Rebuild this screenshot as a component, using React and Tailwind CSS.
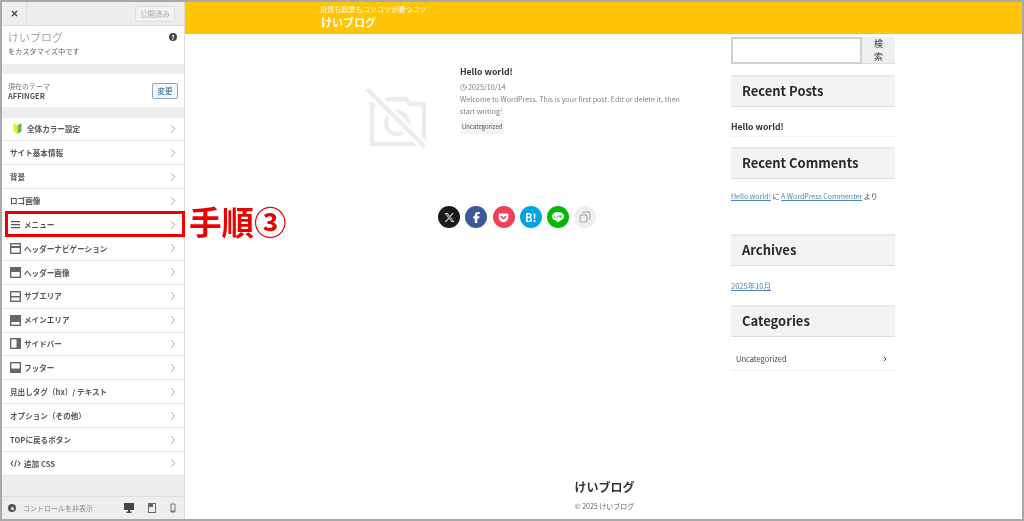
import React from "react";
import { FaXTwitter, FaFacebookF, FaGetPocket } from "react-icons/fa6";
import { Copy, ChevronRight, Clock, X } from "lucide-react";

const font = { fontFamily: '"Noto Sans CJK JP", "Noto Sans", sans-serif' };

// small layout glyphs from the customizer panel
function PanelIcon({ fill }) {
  return (
    <svg width="11" height="11" viewBox="0 0 11 11" className="shrink-0">
      <rect x="0.7" y="0.7" width="9.6" height="9.6" fill="none" stroke="#666" strokeWidth="1.4" />
      <path d={fill} fill="#666" />
    </svg>
  );
}

function MenuIcon() {
  return (
    <svg width="11" height="11" viewBox="0 0 11 11" className="shrink-0">
      <path d="M1 2h9v1.300H1zM1 5h9v1.300H1zM1 8h9v1.300H1z" fill="#555" />
    </svg>
  );
}

function CodeIcon() {
  return (
    <svg width="11" height="9" viewBox="0 0 11 9" className="shrink-0">
      <path d="M3 2 1 4.500 3 7M8 2l2 2.500L8 7M6.300 1 4.700 8" fill="none" stroke="#555" strokeWidth="1.1" />
    </svg>
  );
}

function Beginner() {
  return (
    <svg width="11" height="13" viewBox="0 0 11 13" className="shrink-0">
      <path d="M1.500 1l4 2.500V12l-4-2.500z" fill="#f4ea1a" />
      <path d="M9.500 1l-4 2.500V12l4-2.500z" fill="#5cb85c" />
    </svg>
  );
}

const menuItems = [
  { label: "全体カラー設定", icon: <Beginner />, beginner: true },
  { label: "サイト基本情報" },
  { label: "背景" },
  { label: "ロゴ画像" },
  { label: "メニュー", icon: <MenuIcon /> },
  { label: "ヘッダーナビゲーション", icon: <PanelIcon fill="M1 3h9v2H1z" /> },
  { label: "ヘッダー画像", icon: <PanelIcon fill="M1 1h9v4H1z" /> },
  { label: "サブエリア", icon: <PanelIcon fill="M1 5h9v1.500H1z" /> },
  { label: "メインエリア", icon: <PanelIcon fill="M1 1h9v6H1z" /> },
  { label: "サイドバー", icon: <PanelIcon fill="M6.500 1H10v9H6.500z" /> },
  { label: "フッター", icon: <PanelIcon fill="M1 6.500h9V10H1z" /> },
  { label: "見出しタグ（hx）/ テキスト" },
  { label: "オプション（その他）" },
  { label: "TOPに戻るボタン" },
  { label: "追加 CSS", icon: <CodeIcon /> },
];

function MenuRow({ item }) {
  return (
    <div className={`flex h-[23.9px] items-center justify-between border-b border-[#e6e6e6] bg-white pr-[4px] ${item.beginner ? "pl-[10px]" : "pl-[8px]"}`}>
      <div className={`flex items-center ${item.beginner ? "gap-[4px]" : "gap-[3px]"}`}>
        {item.icon}
        <span className="text-[7.6px] font-bold text-[#555]">{item.label}</span>
      </div>
      <ChevronRight size={14} strokeWidth={1.5} className="text-[#9a9a9a]" />
    </div>
  );
}

function Sidebar() {
  return (
    <aside className="flex w-[183px] shrink-0 flex-col border-r border-[#ddd] bg-[#eeeeee]">
      <div className="flex h-[24px] shrink-0 items-center justify-between border-b border-[#ddd]">
        <div className="flex h-full w-[25px] items-center justify-center border-r border-[#ddd] text-[#444]">
          <X size={9} strokeWidth={3.5} />
        </div>
        <div className="mr-[9px] flex h-[16px] w-[40px] items-center justify-center rounded-[2px] border border-[#ddd] bg-[#f3f3f3] text-[7.5px] text-[#aaa]">公開済み</div>
      </div>
      <div className="flex h-[38px] shrink-0 items-start justify-between bg-white pl-[6px] pr-[7px] pt-[4px]">
        <div>
          <div className="text-[11px] leading-[15px] text-[#a8a8a8]">けいブログ</div>
          <div className="text-[7.2px] leading-[12px] text-[#666]">をカスタマイズ中です</div>
        </div>
        <div className="mt-[3px] flex h-[8px] w-[8px] items-center justify-center rounded-full bg-[#444] text-[6.5px] font-bold leading-none text-white">?</div>
      </div>
      <div className="mt-[10px] flex h-[33px] shrink-0 items-center justify-between bg-white pl-[6px] pr-[6px]">
        <div>
          <div className="text-[7px] leading-[10px] text-[#777]">現在のテーマ</div>
          <div className="text-[7.5px] font-bold leading-[10px] text-[#555]">AFFINGER</div>
        </div>
        <div className="flex h-[16px] w-[26px] items-center justify-center rounded-[2px] border border-[#7fa8c9] bg-[#f4f7f9] text-[7.5px] text-[#2c5f88]">変更</div>
      </div>
      <div className="mt-[10.5px] shrink-0">
        {menuItems.map((item) => (
          <MenuRow key={item.label} item={item} />
        ))}
      </div>
      <div className="mt-auto flex h-[23px] shrink-0 items-center border-t border-[#ddd] pl-[6px] pr-[8px]">
        <div className="flex h-[8px] w-[8px] items-center justify-center rounded-full bg-[#555]">
          <div className="h-[3px] w-[3px] rounded-full bg-[#eee]"></div>
        </div>
        <span className="ml-[7px] text-[7px] text-[#888]">コントロールを非表示</span>
        <div className="ml-auto flex items-center gap-[14px]">
          <svg width="10" height="10" viewBox="0 0 10 10"><path d="M0 0h10v7H6v1.500h1.500V10h-5V8.500H4V7H0z" fill="#444" /></svg>
          <svg width="8" height="10" viewBox="0 0 8 10"><rect x="0.500" y="0.500" width="7" height="9" fill="none" stroke="#666" /><path d="M1 1h4v3H1z" fill="#666" /></svg>
          <svg width="6" height="10" viewBox="0 0 6 10"><rect x="0.500" y="0.500" width="5" height="9" rx="1" fill="#777" /><rect x="1.500" y="1.500" width="3" height="6" fill="#eee" /></svg>
        </div>
      </div>
    </aside>
  );
}

function ShareButton({ bg, children }) {
  return <div className={`flex h-[22px] w-[22px] items-center justify-center rounded-full ${bg}`}>{children}</div>;
}

function ShareRow() {
  return (
    <div className="mt-[54px] ml-[253px] flex gap-[5.3px]">
      <ShareButton bg="bg-[#1a1a1a]"><FaXTwitter size={11} color="#d8d8d8" /></ShareButton>
      <ShareButton bg="bg-[#3b5998]"><FaFacebookF size={11} color="#fff" /></ShareButton>
      <ShareButton bg="bg-[#ee4056]"><FaGetPocket size={11} color="#fff" /></ShareButton>
      <ShareButton bg="bg-[#00a4de]"><span className="text-[11px] font-bold leading-none text-white">B!</span></ShareButton>
      <ShareButton bg="bg-[#00b900]">
        <svg width="14" height="13" viewBox="0 0 14 13">
          <path d="M7 1C3.500 1 1 3 1 5.500c0 2.300 2 4 4.800 4.400.4.100.4.400.3 1-.1.500.2.600.7.300C8.500 10.200 13 8 13 5.500 13 3 10.500 1 7 1z" fill="#fff" />
          <path d="M3.500 4.500v2h2M6.500 4.500v2M8 6.500v-2l1.500 2v-2M11 4.500h-.8v2h.8" fill="none" stroke="#00b900" strokeWidth="0.6" />
        </svg>
      </ShareButton>
      <ShareButton bg="bg-[#eeeeee]"><Copy size={12} color="#999" strokeWidth={1.8} className="-scale-x-100" /></ShareButton>
    </div>
  );
}

function WidgetTitle({ children }) {
  return (
    <div className="flex h-[32px] items-center border-t-2 border-b border-t-[#e8e8e8] border-b-[#dcdcdc] bg-[#f3f3f3] pb-[2px] pl-[11px] text-[13px] font-bold text-[#2a2a2a]">
      {children}
    </div>
  );
}

function RightColumn() {
  return (
    <div className="w-[164px] shrink-0 text-[#333]">
      <div className="mt-[3px] flex h-[27px]">
        <div className="w-[131px] border-2 border-[#d0d0d0] bg-white"></div>
        <div className="flex w-[33px] items-center justify-center border-b border-[#ddd] bg-[#efefef] px-[10px] text-center text-[9px] leading-[13px] text-[#333]">検索</div>
      </div>
      <div className="mt-[11px]"><WidgetTitle>Recent Posts</WidgetTitle></div>
      <div className="flex h-[30px] items-end border-b border-[#f3f3f3] pb-[3px] text-[8.7px] font-bold text-[#333]">Hello world!</div>
      <div className="mt-[10px]"><WidgetTitle>Recent Comments</WidgetTitle></div>
      <div className="mt-[11px] text-[7px] leading-[12px] text-[#444]">
        <span className="text-[#4f86b5] underline">Hello world!</span> に <span className="text-[#4f86b5] underline">A WordPress Commenter</span> より
      </div>
      <div className="mt-[32px]"><WidgetTitle>Archives</WidgetTitle></div>
      <div className="mt-[14px] text-[7.5px] leading-[12px] text-[#4f86b5] underline">2025年10月</div>
      <div className="mt-[13px]"><WidgetTitle>Categories</WidgetTitle></div>
      <div className="mt-[10px] flex h-[24px] items-center justify-between border-b border-[#eee] pl-[5px] pr-[6px] text-[7.5px] text-[#444]">
        <span>Uncategorized</span>
        <ChevronRight size={8} strokeWidth={3} className="text-[#444]" />
      </div>
    </div>
  );
}

function PostCard() {
  return (
    <div className="flex">
      <div className="ml-[179px] mt-[21px] w-[66px] shrink-0">
        <svg width="66" height="66" viewBox="0 0 66 66">
          <path d="M8 18h10l6-5h18l4 5h14v40H8z" fill="none" stroke="#ececec" strokeWidth="4.500" />
          <circle cx="33" cy="37" r="11" fill="none" stroke="#ececec" strokeWidth="4.500" />
          <path d="M3 3l60 60" stroke="#ffffff" strokeWidth="10" />
          <path d="M3 3l58 58" stroke="#ececec" strokeWidth="4.500" />
        </svg>
      </div>
      <div className="ml-[30px] w-[225px]">
        <div className="text-[8.7px] font-bold leading-[14px] text-[#333]">Hello world!</div>
        <div className="mt-[2px] flex items-center gap-[1px] text-[7.2px] leading-[12px] text-[#777]">
          <Clock size={7} strokeWidth={2} />
          2025/10/14
        </div>
        <div className="text-[7.1px] leading-[12px] text-[#808080]">
          Welcome to WordPress. This is your first post. Edit or delete it, then start writing!
        </div>
        <div className="mt-[3px] w-fit bg-[#f3f3f3] px-[2px] text-[6px] leading-[14px] text-[#555]">Uncategorized</div>
      </div>
    </div>
  );
}

export default function App() {
  return (
    <div className="relative flex h-[521px] w-[1024px] overflow-hidden border-2 border-[#a9a9a9] bg-white blur-[0.4px]" style={font}>
      <Sidebar />
      <main className="flex min-w-0 flex-1 flex-col">
        <header className="h-[32px] shrink-0 bg-[#ffc408] pl-[135px] text-white">
          <div className="pt-[1px] text-[7.1px] leading-[12px]">投資も副業もコツコツが勝つコツ</div>
          <div className="pl-[1px] text-[11px] font-bold leading-[15px]">けいブログ</div>
        </header>
        <div className="flex flex-1">
          <div className="min-w-0 flex-1">
            <div className="pt-[31px]"><PostCard /></div>
            <ShareRow />
          </div>
          <div className="mr-[127px] ml-auto"><RightColumn /></div>
        </div>
        <footer className="shrink-0 pb-[8px] pl-[2px] text-center">
          <div className="text-[12px] font-bold leading-[18px] text-[#333]">けいブログ</div>
          <div className="mt-[5px] text-[7px] leading-[10px] text-[#666]">© 2025 けいブログ</div>
        </footer>
      </main>
      {/* annotation over the customizer panel */}
      <div className="absolute left-[3px] top-[209px] h-[26px] w-[180px] border-[3px] border-[#ee0000]"></div>
      <div className="absolute left-[187px] top-[199px] text-[32.500px] font-bold leading-[40px] text-[#ee0000]">手順③</div>
    </div>
  );
}
